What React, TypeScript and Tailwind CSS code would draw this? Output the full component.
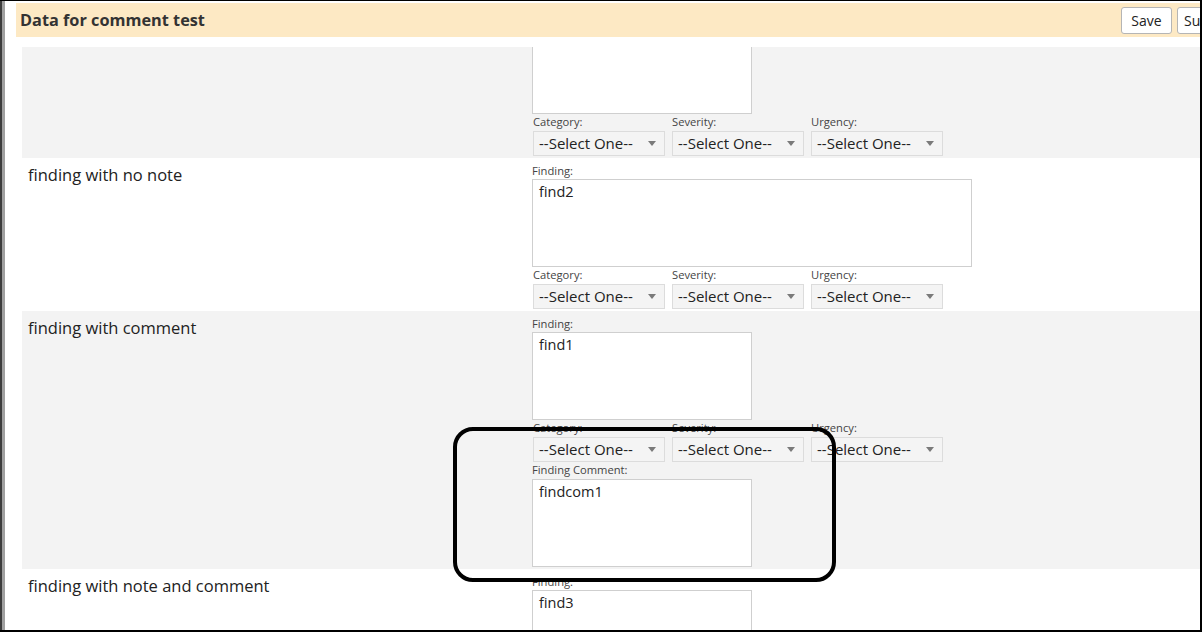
import React from 'react';

type Row = {
  label: string;
  finding: string;
  wideFinding?: boolean;
  comment?: string;
};

const rows: Row[] = [
  { label: '', finding: '' },
  { label: 'finding with no note', finding: 'find2', wideFinding: true },
  { label: 'finding with comment', finding: 'find1', comment: 'findcom1' },
  { label: 'finding with note and comment', finding: 'find3' },
];

function SmallLabel({ children }: { children: React.ReactNode }) {
  return <div className="text-[11.2px] leading-[12px] text-[#444] h-[12px]">{children}</div>;
}

function SelectBox({ label }: { label: string }) {
  return (
    <div className="flex flex-col gap-[3px]">
      <SmallLabel>{label}</SmallLabel>
      <div className="w-[132px] h-[25px] bg-[#f4f4f4] border border-[#dcdcdc] flex items-center justify-between pl-[5px] pr-[8px] text-[15px] text-[#222]">
        <span>--Select One--</span>
        <svg width="8" height="5" viewBox="0 0 8 5">
          <path d="M0 0h8L4 5z" fill="#7a7a7a" />
        </svg>
      </div>
    </div>
  );
}

function TextBox({ value, wide }: { value: string; wide?: boolean }) {
  return (
    <div
      className={`${wide ? 'w-[440px]' : 'w-[220px]'} h-[88px] bg-white border border-[#cfcfcf] px-[6px] pt-[2px] text-[14.5px] leading-[20px] text-[#222]`}
    >
      {value}
    </div>
  );
}

function FindingRow({ row, shaded }: { row: Row; shaded: boolean }) {
  return (
    <div className={`flex ${shaded ? 'bg-[#f3f3f3]' : 'bg-white'} pt-[7px] pb-[2px]`}>
      <div className="w-[510px] pl-[6px] text-[16.5px] leading-[20px] text-[#222]">{row.label}</div>
      <div className="flex flex-col">
        <div className="flex flex-col gap-[2px]">
          <SmallLabel>Finding:</SmallLabel>
          <TextBox value={row.finding} wide={row.wideFinding} />
        </div>
        <div className="flex gap-[7px] mt-[2px] pl-[1px]">
          <SelectBox label="Category:" />
          <SelectBox label="Severity:" />
          <SelectBox label="Urgency:" />
        </div>
        {row.comment !== undefined && (
          <div className="flex flex-col gap-[3px] mt-[2px]">
            <SmallLabel>Finding Comment:</SmallLabel>
            <TextBox value={row.comment} />
          </div>
        )}
      </div>
    </div>
  );
}

export default function App() {
  return (
    <div
      className="relative w-[1202px] h-[632px] overflow-hidden bg-white border-t border-t-black border-r-2 border-r-black border-b-2 border-b-black"
      style={{ fontFamily: '"Open Sans", "Noto Sans", sans-serif' }}
    >
      <div className="flex h-full">
        <div className="w-[2px] bg-[#3c3c3c]" />
        <div className="w-[3px] bg-[#a0a0a0]" />
        <div className="flex-1 flex flex-col min-w-0">
          <div className="mt-[2px] ml-[11px] h-[34px] bg-[#fde9c4] flex items-center justify-between pl-[4px] overflow-hidden">
            <h1 className="text-[16.3px] font-bold text-[#333]">Data for comment test</h1>
            <div className="flex gap-[5px] -mr-[28px]">
              <button className="w-[51px] h-[27px] bg-white border border-[#b5b5b5] rounded-[3px] text-[14px] text-[#222]">Save</button>
              <button className="w-[51px] h-[27px] bg-white border border-[#b5b5b5] rounded-[3px] text-[14px] text-[#222] text-left pl-[6px]">Submit</button>
            </div>
          </div>
          <div className="mt-[10px] ml-[17px] flex-1 overflow-hidden">
            <div className="-mt-[42px]">
              {rows.map((row, i) => (
                <FindingRow key={i} row={row} shaded={i % 2 === 0} />
              ))}
            </div>
          </div>
        </div>
      </div>
      {/* highlight marker around the comment field */}
      <div className="absolute left-[453px] top-[426px] w-[383px] h-[155px] border-[4px] border-black rounded-[20px]" />
    </div>
  );
}
